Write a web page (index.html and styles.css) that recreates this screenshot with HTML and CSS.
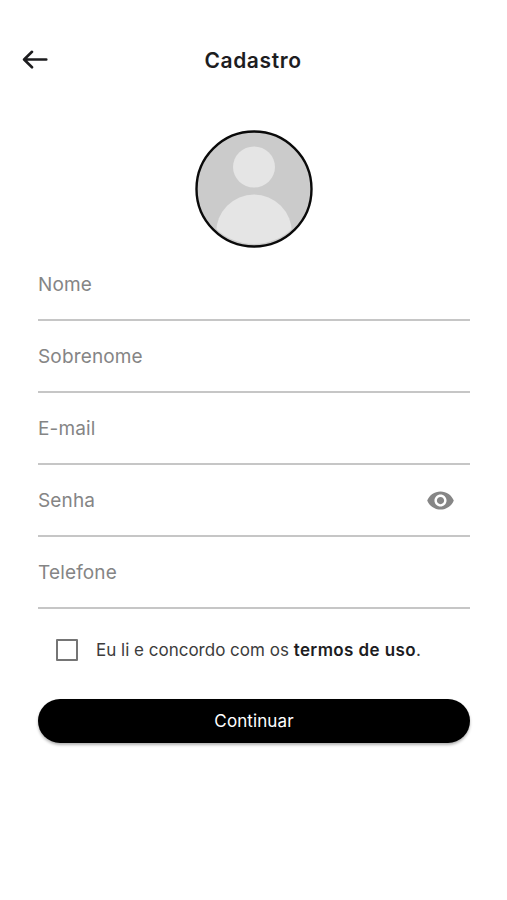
FILE: index.html
```html
<!DOCTYPE html>
<html lang="pt-br">
<head>
    <meta charset="UTF-8">
    <meta name="viewport" content="width=device-width, initial-scale=1.0">
    <title>Cadastro</title>
    <link rel="stylesheet" href="styles.css">
</head>
<body>
    <header class="header">
        <a href="#" class="back" aria-label="Voltar">
            <svg width="26" height="20" viewBox="0 0 26 20">
                <path d="M24.3 9.5H2.5M10 1.8L2.1 9.5l7.9 7.8"/>
            </svg>
        </a>
        <h1>Cadastro</h1>
    </header>

    <form class="form">
        <!-- Foto do perfil -->
        <svg class="avatar" width="118" height="118" viewBox="0 0 118 118">
            <defs>
                <clipPath id="circle"><circle cx="59" cy="59" r="55"/></clipPath>
            </defs>
            <circle class="avatar-bg" cx="59" cy="59" r="57.5"/>
            <g class="avatar-person" clip-path="url(#circle)">
                <ellipse cx="59" cy="37" rx="21" ry="20.5"/>
                <ellipse cx="59" cy="103" rx="38" ry="38.5"/>
            </g>
        </svg>

        <div class="field">
            <input type="text" placeholder="Nome">
        </div>
        <div class="field">
            <input type="text" placeholder="Sobrenome">
        </div>
        <div class="field">
            <input type="email" placeholder="E-mail">
        </div>
        <div class="field">
            <input type="password" placeholder="Senha">
            <svg class="eye" width="29" height="29" viewBox="0 0 24 24">
                <path d="M12 4.5C7 4.5 2.73 7.61 1 12c1.73 4.39 6 7.5 11 7.5s9.27-3.11 11-7.5c-1.73-4.39-6-7.5-11-7.5zM12 17c-2.76 0-5-2.24-5-5s2.24-5 5-5 5 2.24 5 5-2.24 5-5 5zm0-8c-1.66 0-3 1.34-3 3s1.34 3 3 3 3-1.34 3-3-1.34-3-3-3z"/>
            </svg>
        </div>
        <div class="field">
            <input type="tel" placeholder="Telefone">
        </div>

        <label class="terms">
            <input type="checkbox">
            <span>Eu li e concordo com os <strong>termos de uso</strong>.</span>
        </label>

        <button type="button" class="btn">Continuar</button>
    </form>
</body>
</html>
```
FILE: styles.css
```css
* {
    margin: 0;
    padding: 0;
    box-sizing: border-box;
}

body {
    font-family: Inter, sans-serif;
    background-color: #fff;
    color: #1d1d1f;
    min-height: 100vh;
}

.header {
    display: grid;
    grid-template-columns: 26px 1fr 26px;
    align-items: center;
    height: 80px;
    padding: 40px 23px 0 22px;
}

.back {
    display: flex;
}

.back svg {
    fill: none;
    stroke: #1d1d1f;
    stroke-width: 2.6;
    stroke-linecap: round;
    stroke-linejoin: round;
}

h1 {
    font-size: 21px;
    font-weight: 600;
    letter-spacing: 0.6px;
    text-align: center;
}

.form {
    display: flex;
    flex-direction: column;
    width: 432px;
    margin-left: 38px;
    padding-top: 50px;
}

.avatar {
    align-self: center;
    margin-bottom: 1px;
}

.avatar-bg {
    fill: #cbcbcb;
    stroke: #0a0a0a;
    stroke-width: 2.4;
}

.avatar-person {
    fill: #e5e5e5;
}

.field {
    display: flex;
    align-items: center;
    height: 72px;
    border-bottom: 2px solid #c6c6c6;
}

.field input {
    flex: 1;
    height: 70px;
    border: none;
    outline: none;
    background: none;
    font-family: inherit;
    font-size: 19px;
    letter-spacing: 0.15px;
    color: #1d1d1f;
}

.field input::placeholder {
    color: #858585;
}

.eye {
    margin-right: 15px;
    fill: #868686;
}

.terms {
    display: flex;
    align-items: center;
    gap: 18px;
    height: 24px;
    margin: 29px 0 0 18px;
    font-size: 17px;
    color: #3c3c3c;
}

.terms input {
    appearance: none;
    width: 22px;
    height: 22px;
    border: 2px solid #757575;
    border-radius: 1px;
}

.terms strong {
    font-weight: 600;
    letter-spacing: 0.4px;
    color: #1d1d1f;
}

.btn {
    height: 44px;
    margin-top: 36.5px;
    border: none;
    border-radius: 22px;
    background-color: #000;
    color: #fff;
    font-family: inherit;
    font-size: 17px;
    letter-spacing: 0.1px;
    box-shadow: 0 2px 3px rgba(0, 0, 0, 0.3);
    cursor: pointer;
}
```
